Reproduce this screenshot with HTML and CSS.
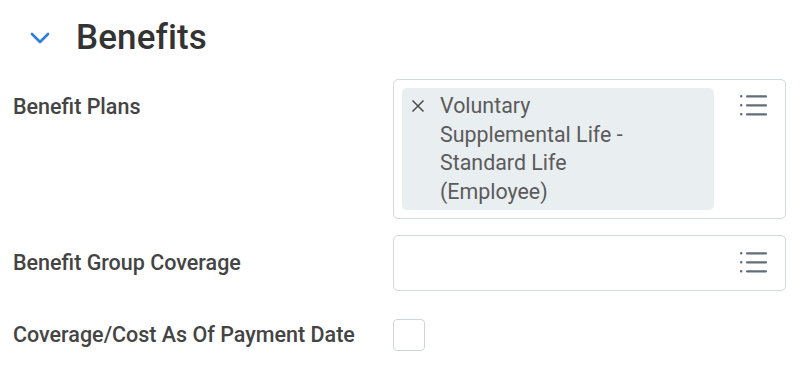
FILE: index.html
```html
<!DOCTYPE html>
<html>
<head>
<meta charset="utf-8">
<link rel="stylesheet" href="styles.css">
</head>
<body>
<section class="panel">
  <header class="section-head">
    <svg class="chevron" width="20" height="12" viewBox="0 0 20 12"><path d="M2 2 L10 10 L18 2" fill="none" stroke="#2f7fd8" stroke-width="2.6" stroke-linecap="round" stroke-linejoin="round"/></svg>
    <h2 class="title">Benefits</h2>
  </header>
  <div class="form">
    <div class="row">
      <div class="label">Benefit Plans</div>
      <div class="field tall">
        <div class="chip">
          <svg class="chip-x" width="14" height="14" viewBox="0 0 14 14"><path d="M1.5 1.5 L12.5 12.5 M12.5 1.5 L1.5 12.5" stroke="#4a4a4a" stroke-width="1.5" fill="none"/></svg>
          <span class="chip-text">Voluntary<br>Supplemental Life -<br>Standard Life<br>(Employee)</span>
        </div>
        <svg class="list-icon" width="28" height="22" viewBox="0 0 28 22"><g fill="#5f6e79"><rect x="0" y="1" width="2.4" height="2.4" rx="1"/><rect x="0" y="10" width="2.4" height="2.4" rx="1"/><rect x="0" y="19" width="2.4" height="2.4" rx="1"/><rect x="6" y="1.2" width="21" height="2.2" rx="1"/><rect x="6" y="10.2" width="21" height="2.2" rx="1"/><rect x="6" y="19.2" width="21" height="2.2" rx="1"/></g></svg>
      </div>
    </div>
    <div class="row">
      <div class="label">Benefit Group Coverage</div>
      <div class="field short">
        <svg class="list-icon" width="28" height="22" viewBox="0 0 28 22"><g fill="#5f6e79"><rect x="0" y="1" width="2.4" height="2.4" rx="1"/><rect x="0" y="10" width="2.4" height="2.4" rx="1"/><rect x="0" y="19" width="2.4" height="2.4" rx="1"/><rect x="6" y="1.2" width="21" height="2.2" rx="1"/><rect x="6" y="10.2" width="21" height="2.2" rx="1"/><rect x="6" y="19.2" width="21" height="2.2" rx="1"/></g></svg>
      </div>
    </div>
    <div class="row">
      <div class="label">Coverage/Cost As Of Payment Date</div>
      <div class="check-wrap"><span class="checkbox"></span></div>
    </div>
  </div>
</section>
</body>
</html>
```
FILE: styles.css
```css
html, body {
  margin: 0;
  padding: 0;
  background: #fff;
}
body {
  font-family: Roboto, "Liberation Sans", sans-serif;
  color: #333;
  width: 800px;
  height: 368px;
  overflow: hidden;
}
.panel {
  padding: 0 14px 0 13px;
}
.section-head {
  display: flex;
  align-items: center;
  height: 79px;
}
.chevron {
  margin-left: 17px;
  margin-top: -4px;
}
.title {
  margin: -3px 0 0 26px;
  font-size: 35px;
  font-weight: 500;
  color: #333;
  line-height: 40px;
  letter-spacing: 0.1px;
}
.form {
  display: flex;
  flex-direction: column;
  gap: 16px;
}
.row {
  display: flex;
  align-items: flex-start;
  min-height: 56px;
}
.label {
  width: 380px;
  flex: none;
  font-size: 21.5px;
  font-weight: 500;
  line-height: 56px;
  color: #444;
}
.field {
  box-sizing: border-box;
  width: 393px;
  border: 1px solid #d3d9de;
  border-radius: 5px;
  display: flex;
  align-items: flex-start;
  justify-content: space-between;
}
.field.tall {
  height: 140px;
  padding: 8px 17px 0 8px;
}
.field.short {
  height: 56px;
  padding: 15px 17px 0 8px;
}
.field .list-icon {
  margin-left: auto;
}
.field.tall .list-icon {
  margin-top: 6px;
}
.chip {
  width: 312px;
  box-sizing: border-box;
  background: #e9eef1;
  border-radius: 5px;
  padding: 4px 10px 4px 9px;
  display: flex;
  align-items: flex-start;
  gap: 15px;
}
.chip-x {
  flex: none;
  margin-top: 7px;
}
.chip-text {
  font-size: 21.4px;
  line-height: 28.5px;
  color: #5b5b5b;
  font-weight: 400;
}
.check-wrap {
  padding-top: 12px;
}
.checkbox {
  display: block;
  box-sizing: border-box;
  width: 32px;
  height: 32px;
  border: 1.5px solid #cfd6db;
  border-radius: 4px;
  background: #fff;
}
```
